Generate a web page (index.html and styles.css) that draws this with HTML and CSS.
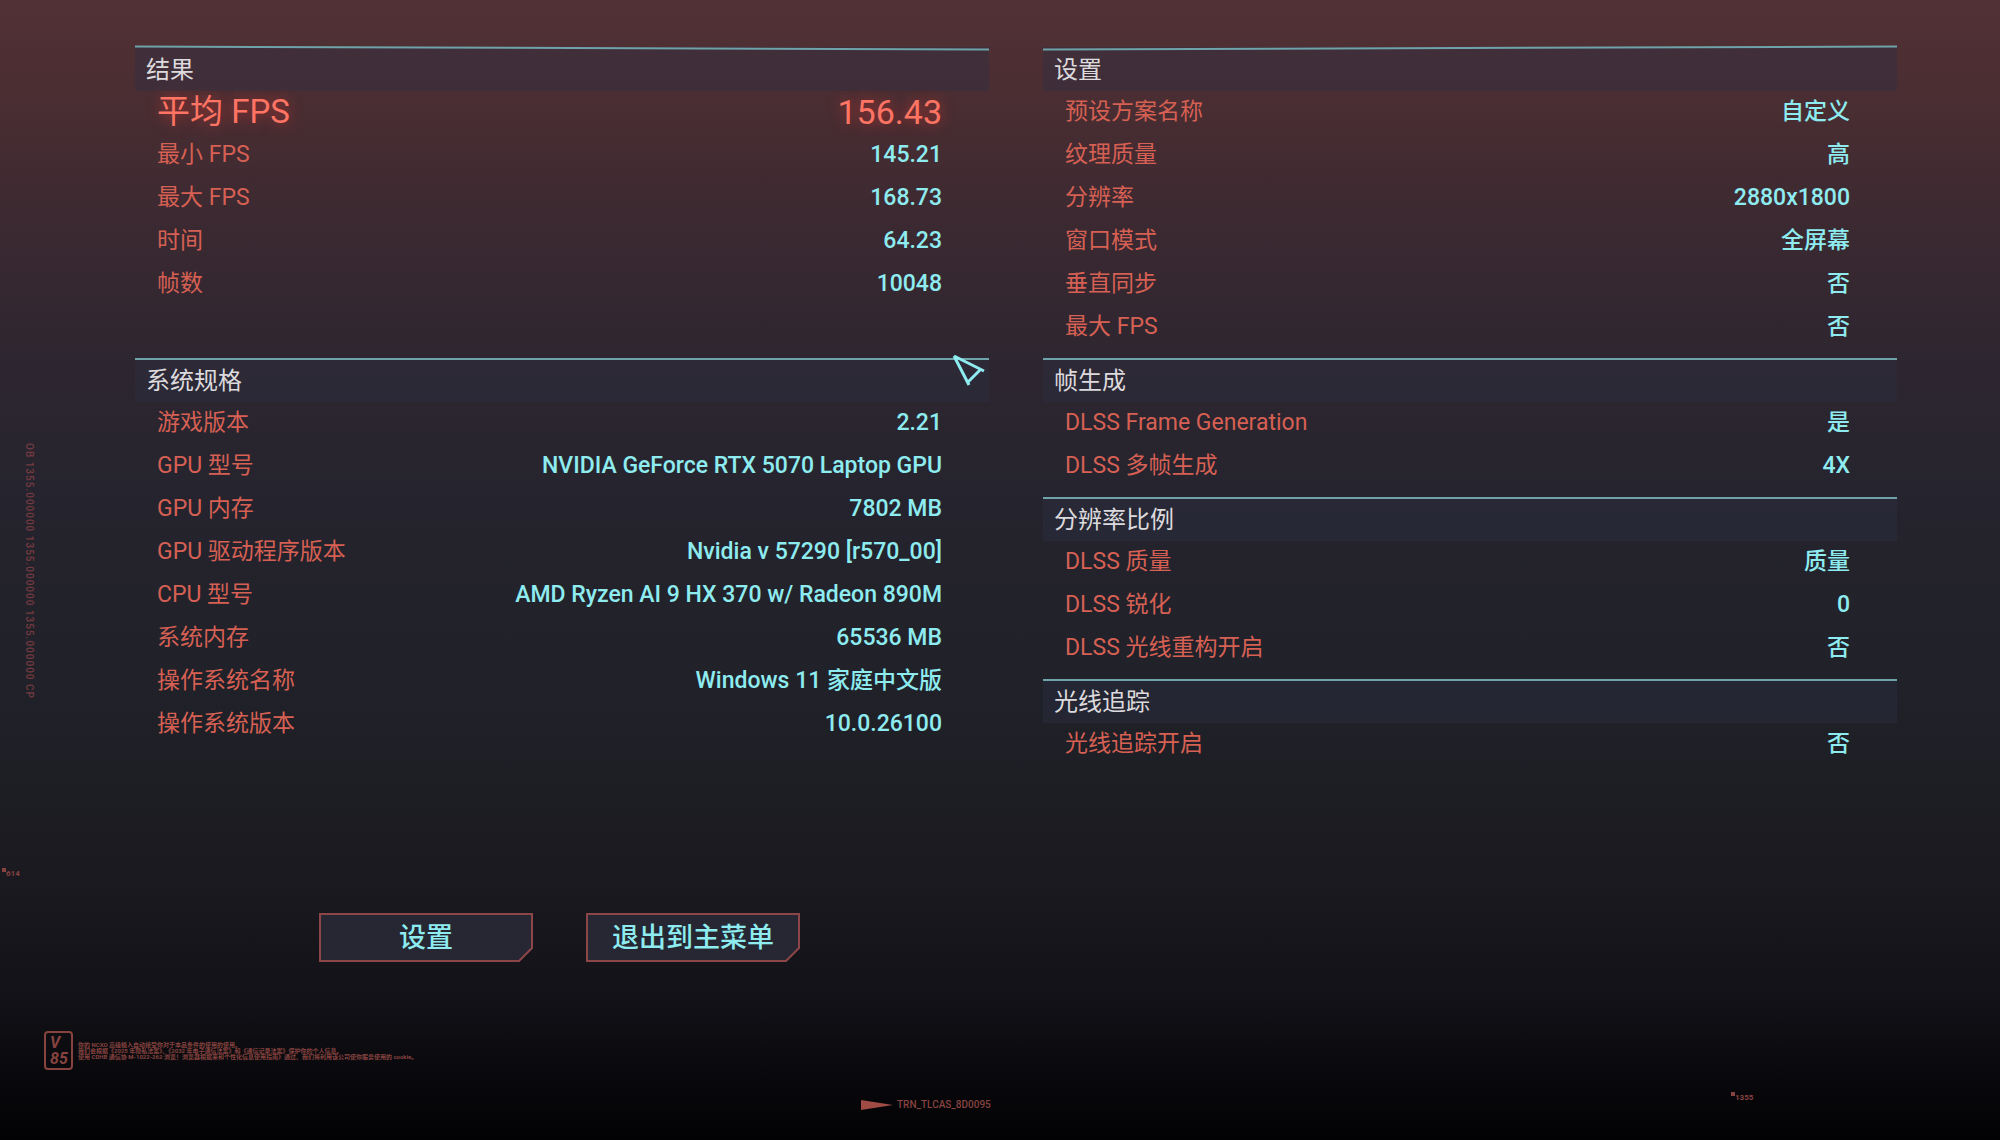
FILE: index.html
```
<!DOCTYPE html>
<html lang="zh-CN">
<head>
    <meta charset="UTF-8">
    <meta name="viewport" content="width=device-width, initial-scale=1.0">
    <title>基准测试结果</title>
    <link rel="stylesheet" href="styles.css">
</head>
<body>
    <main class="benchmark">
        <div class="column">
            <section class="panel results">
                <h2 class="slope-down">结果</h2>
                <dl>
                    <div class="row highlight"><dt>平均 FPS</dt><dd>156.43</dd></div>
                    <div class="row"><dt>最小 FPS</dt><dd>145.21</dd></div>
                    <div class="row"><dt>最大 FPS</dt><dd>168.73</dd></div>
                    <div class="row"><dt>时间</dt><dd>64.23</dd></div>
                    <div class="row"><dt>帧数</dt><dd>10048</dd></div>
                </dl>
            </section>
            <section class="panel">
                <h2>系统规格</h2>
                <dl>
                    <div class="row"><dt>游戏版本</dt><dd>2.21</dd></div>
                    <div class="row"><dt>GPU 型号</dt><dd>NVIDIA GeForce RTX 5070 Laptop GPU</dd></div>
                    <div class="row"><dt>GPU 内存</dt><dd>7802 MB</dd></div>
                    <div class="row"><dt>GPU 驱动程序版本</dt><dd>Nvidia v 57290 [r570_00]</dd></div>
                    <div class="row"><dt>CPU 型号</dt><dd>AMD Ryzen AI 9 HX 370 w/ Radeon 890M</dd></div>
                    <div class="row"><dt>系统内存</dt><dd>65536 MB</dd></div>
                    <div class="row"><dt>操作系统名称</dt><dd>Windows 11 家庭中文版</dd></div>
                    <div class="row"><dt>操作系统版本</dt><dd>10.0.26100</dd></div>
                </dl>
            </section>
            <div class="button-group">
                <button type="button" class="cut-button">
                    <svg viewBox="0 0 214 49" preserveAspectRatio="none" aria-hidden="true"><path d="M1 1H213V35L200 48H1Z"/></svg>
                    <span>设置</span>
                </button>
                <button type="button" class="cut-button">
                    <svg viewBox="0 0 214 49" preserveAspectRatio="none" aria-hidden="true"><path d="M1 1H213V35L200 48H1Z"/></svg>
                    <span>退出到主菜单</span>
                </button>
            </div>
        </div>
        <div class="column">
            <section class="panel">
                <h2 class="slope-up">设置</h2>
                <dl>
                    <div class="row"><dt>预设方案名称</dt><dd>自定义</dd></div>
                    <div class="row"><dt>纹理质量</dt><dd>高</dd></div>
                    <div class="row"><dt>分辨率</dt><dd>2880x1800</dd></div>
                    <div class="row"><dt>窗口模式</dt><dd>全屏幕</dd></div>
                    <div class="row"><dt>垂直同步</dt><dd>否</dd></div>
                    <div class="row"><dt>最大 FPS</dt><dd>否</dd></div>
                </dl>
            </section>
            <section class="panel">
                <h2>帧生成</h2>
                <dl>
                    <div class="row"><dt>DLSS Frame Generation</dt><dd>是</dd></div>
                    <div class="row"><dt>DLSS 多帧生成</dt><dd>4X</dd></div>
                </dl>
            </section>
            <section class="panel">
                <h2>分辨率比例</h2>
                <dl>
                    <div class="row"><dt>DLSS 质量</dt><dd>质量</dd></div>
                    <div class="row"><dt>DLSS 锐化</dt><dd>0</dd></div>
                    <div class="row"><dt>DLSS 光线重构开启</dt><dd>否</dd></div>
                </dl>
            </section>
            <section class="panel">
                <h2>光线追踪</h2>
                <dl>
                    <div class="row"><dt>光线追踪开启</dt><dd>否</dd></div>
                </dl>
            </section>
        </div>
    </main>

    <!-- HUD decoration -->
    <div class="hud hud-side">OB 1355.000000 1355.000000 1355.000000 CP</div>
    <div class="hud hud-mark mark-left">614</div>
    <div class="hud hud-mark mark-right">1355</div>
    <div class="hud hud-legal">
        <div class="badge"><span>V</span><span>85</span></div>
        <p>你的 NCXO 高级植入自动接受你对于本品条件的使用的使用。<br>我们会根据《2025 年隐私法案》、《2032 年电子通信法案》和《通信记录法案》保护你的个人信息。<br>使用 CDHB 通信协 M-1022-262 浏览！浏览器根据来和个性化信息使用指南》通过、我们将利用该公司使你服务使用的 cookie。</p>
    </div>
    <div class="hud hud-train">
        <svg width="32" height="10" viewBox="0 0 32 10" aria-hidden="true"><path d="M0 0L32 5L0 10Z"/></svg>
        <span>TRN_TLCAS_8D0095</span>
    </div>

    <svg class="cursor" width="34" height="34" viewBox="0 0 34 34" aria-hidden="true">
        <path d="M2 2L32 17M2 2L17 31M16 28L28 16"/>
    </svg>
</body>
</html>
```
FILE: styles.css
```
* {
    box-sizing: border-box;
}
body {
    position: relative;
    min-height: 100vh;
    margin: 0;
    overflow: hidden;
    font-family: Roboto, "Noto Sans CJK SC", sans-serif;
    font-size: 23px;
    background: linear-gradient(#523135 0%, #482d32 10%, #3b2931 20%, #2e2630 31%, #25242e 44%, #212129 60%, #1b1b21 75%, #131319 86%, #08080c 95%, #020204 100%);
}
.benchmark {
    display: grid;
    grid-template-columns: 1fr 1fr;
    gap: 54px;
    padding: 47px 103px 0 135px;
}
.panel {
    padding-bottom: 9px;
}
.results {
    padding-bottom: 52px;
}
.panel h2 {
    position: relative;
    height: 44px;
    margin: 0;
    padding: 0 11px;
    font-size: 24px;
    font-weight: 400;
    line-height: 46px;
    color: #dcdadd;
    background: rgba(46, 48, 68, 0.4);
}
.panel h2::before {
    content: "";
    position: absolute;
    top: 0;
    left: 0;
    right: 0;
    height: 2px;
    background: #6fa3aa;
}
.panel .slope-down::before {
    transform: skewY(0.2deg);
}
.panel .slope-up::before {
    transform: skewY(-0.2deg);
}
dl {
    margin: 0;
}
.row {
    display: flex;
    justify-content: space-between;
    height: 43px;
    padding: 0 47px 0 22px;
    line-height: 42px;
}
dt {
    color: #d66053;
}
dd {
    margin: 0;
    font-weight: 500;
    color: #8eecf0;
}
.highlight dt,
.highlight dd {
    font-size: 34px;
    font-weight: 400;
    color: #ff7463;
    text-shadow: 0 0 14px rgba(255, 60, 50, 0.6);
}
.highlight dt {
    font-size: 33px;
}
.button-group {
    display: flex;
    gap: 53px;
    margin: 158px 0 0 184px;
}
.cut-button {
    position: relative;
    width: 214px;
    height: 49px;
    padding: 0;
    border: none;
    background: none;
    font: 500 27px/48px Roboto, "Noto Sans CJK SC", sans-serif;
    color: #8eecf0;
    cursor: pointer;
}
.cut-button svg {
    position: absolute;
    inset: 0;
    width: 100%;
    height: 100%;
    fill: #262732;
    stroke: #8c4648;
    stroke-width: 2;
}
.cut-button span {
    position: relative;
}
.hud {
    position: absolute;
    font-size: 10px;
    font-weight: 500;
    line-height: 12px;
    color: #86433f;
}
.hud-side {
    top: 443px;
    left: 23px;
    writing-mode: vertical-rl;
    letter-spacing: 1px;
    color: #743a40;
}
.hud-mark {
    padding-left: 4px;
    font-size: 8px;
    font-weight: 700;
}
.hud-mark::before {
    content: "";
    position: absolute;
    top: 0;
    left: 0;
    width: 4px;
    height: 4px;
    background: #86433f;
}
.mark-left {
    top: 868px;
    left: 2px;
}
.mark-right {
    top: 1092px;
    left: 1731px;
}
.hud-legal {
    display: flex;
    align-items: center;
    gap: 5px;
    top: 1031px;
    left: 44px;
}
.badge {
    display: flex;
    flex-direction: column;
    width: 29px;
    height: 39px;
    padding: 2px 4px;
    border: 2px solid #86433f;
    border-radius: 4px;
    font-size: 16px;
    font-style: italic;
    font-weight: 700;
    line-height: 16px;
}
.hud-legal p {
    margin: 0;
    font-size: 6px;
    font-weight: 700;
    line-height: 6px;
    white-space: nowrap;
}
.hud-train {
    display: flex;
    align-items: center;
    gap: 4px;
    top: 1099px;
    left: 861px;
}
.hud-train svg {
    fill: #a04c45;
}
.cursor {
    position: absolute;
    top: 354px;
    left: 952px;
    fill: none;
    stroke: #8eecf0;
    stroke-width: 3;
}
```
